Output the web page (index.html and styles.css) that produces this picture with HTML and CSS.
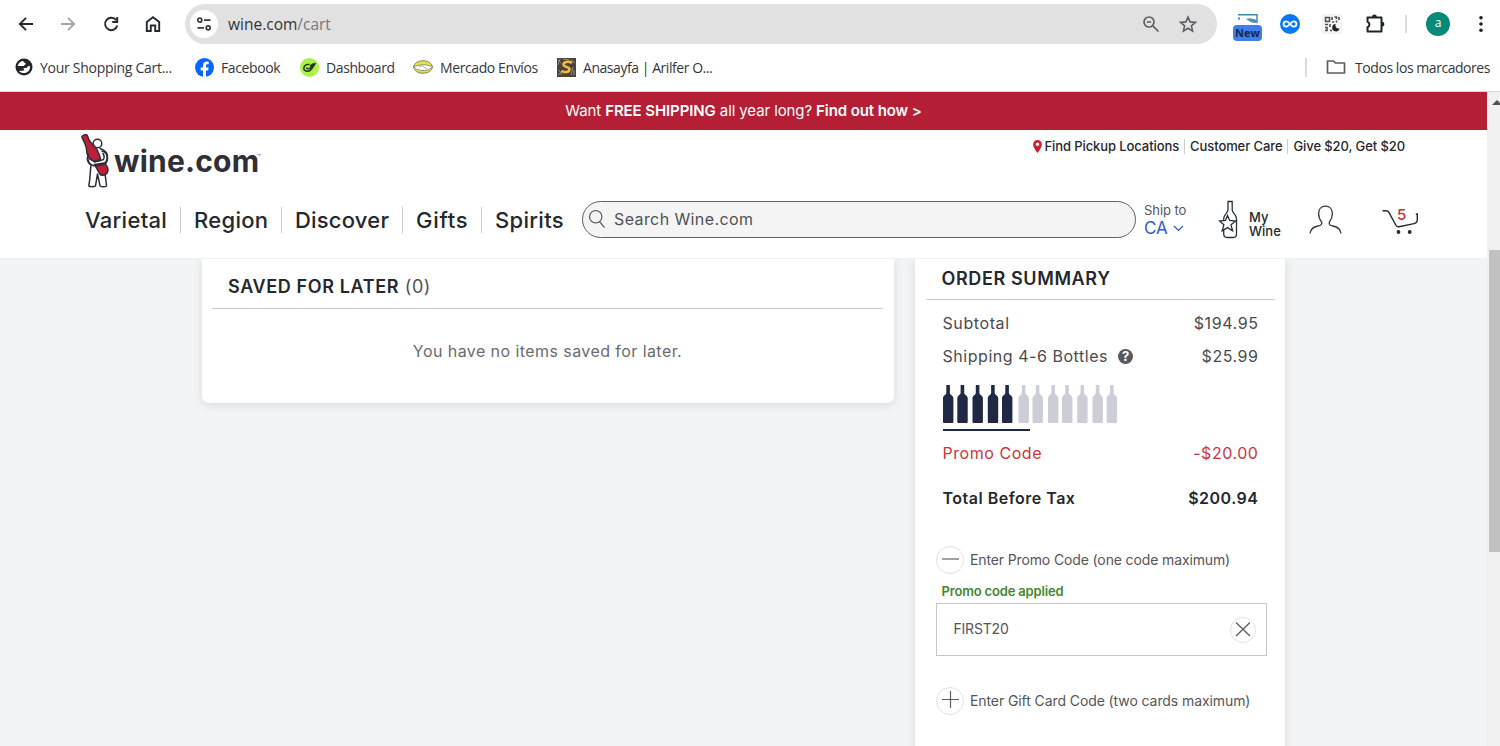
FILE: index.html
```html
<!DOCTYPE html>
<html lang="en">
<head>
  <meta charset="UTF-8" />
  <meta name="viewport" content="width=device-width, initial-scale=1.0"/>
  <title>Your Shopping Cart</title>
  <link rel="stylesheet" href="styles.css">
</head>
<body>
  <!-- Browser toolbar -->
  <div class="toolbar">
    <div class="nav-buttons">
      <svg width="20" height="20" viewBox="0 0 20 20" fill="none" stroke="#27282b" stroke-width="1.9"><path d="M17 10H4.5M10 3.8L3.8 10l6.2 6.2"/></svg>
      <svg width="20" height="20" viewBox="0 0 20 20" fill="none" stroke="#a5a5a7" stroke-width="1.9"><path d="M3 10h12.5M10 3.8l6.2 6.2-6.2 6.2"/></svg>
      <svg width="20" height="20" viewBox="0 0 20 20" fill="none" stroke="#27282b" stroke-width="1.9"><path d="M15.3 6.3A6.2 6.2 0 1 0 16.3 11.5"/><path d="M16.2 3v5h-5" /></svg>
      <svg width="20" height="20" viewBox="0 0 20 20" fill="none" stroke="#27282b" stroke-width="1.9"><path d="M3.800 8L10 3.200 16.200 8v9h-4v-5.500H7.800V17h-4z"/></svg>
    </div>
    <div class="omnibox">
      <span class="site-info">
        <svg width="16" height="16" viewBox="0 0 16 16" fill="none" stroke="#3c3d40" stroke-width="1.7"><circle cx="3.800" cy="4.200" r="2"/><path d="M8 4.200h6.500M1.500 11.800H8"/><circle cx="12.200" cy="11.800" r="2"/></svg>
      </span>
      <span class="url">wine.com<span class="path">/cart</span></span>
      <svg class="zoom-icon" width="18" height="18" viewBox="0 0 18 18" fill="none" stroke="#5f6063" stroke-width="1.7"><circle cx="7" cy="7" r="5"/><path d="M10.800 10.800l5.700 5.700M4.800 7h4.400"/></svg>
      <svg width="20" height="20" viewBox="0 0 20 20" fill="none" stroke="#5f6063" stroke-width="1.6"><path d="M10 3l2.100 4.900 5.300.5-4 3.500 1.200 5.200L10 14.300l-4.600 2.800 1.200-5.200-4-3.500 5.300-.5z"/></svg>
    </div>
    <div class="extensions">
      <span class="ext-new">
        <svg width="20" height="11" viewBox="0 0 20 11"><path d="M.5 0h19v11h-19z" fill="#fff"/><path d="M0 .7h19.500M19 0v9M1 3v3" stroke="#4484a9" stroke-width="1.400"/><path d="M8 5c3.500-2 8 0 11 1v3c-5 .5-7-1.500-11-4z" fill="#4f91bd"/></svg>
        <b>New</b>
      </span>
      <svg class="ext-blue" width="20" height="20" viewBox="0 0 20 20"><circle cx="10" cy="10" r="10" fill="#0878f5"/><path d="M10 10C8.500 8 7.500 7.400 6.200 7.400a2.600 2.600 0 0 0 0 5.200c1.500 0 2.600-1.200 3.800-2.600s2.300-2.600 3.800-2.600a2.600 2.600 0 0 1 0 5.200c-1.300 0-2.300-.6-3.800-2.600z" fill="none" stroke="#fff" stroke-width="1.800"/></svg>
      <svg class="qr" width="18" height="18" viewBox="0 0 18 18" fill="none" stroke="#505050" stroke-width="1.600"><path d="M2.500 2.500h4v4h-4zM9 2v3M11.500 2h2v2M16 2v3M9 7h2M13.500 5.500v2M2 9.500h3M7 9v3M2 12.500h2v3H2M7 15.500h2"/><path d="M12.500 9a3.700 3.700 0 1 0 4 4.500c-2.500.5-4.500-1-4-4.500z" fill="#222" stroke="none"/></svg>
      <svg class="puzzle" width="22" height="22" viewBox="0 0 22 22"><path d="M3.500 4.500h14v14h-14v-4.200a3 3 0 0 0 0-5.600z" fill="none" stroke="#232428" stroke-width="2" stroke-linejoin="round"/><path d="M8 4a2.400 2.400 0 0 1 4.800 0zM18 8.800a2.400 2.400 0 0 1 0 4.800z" fill="#232428"/></svg>
      <span class="bar"></span>
      <span class="avatar">a</span>
      <svg class="menu" width="6" height="20" viewBox="0 0 6 20" fill="#222"><circle cx="3" cy="3.800" r="1.800"/><circle cx="3" cy="10" r="1.800"/><circle cx="3" cy="16.200" r="1.800"/></svg>
    </div>
  </div>

  <div class="bookmarks">
    <span class="bookmark bm-cart"><svg width="18" height="18" viewBox="0 0 18 18"><circle cx="9" cy="9" r="8.500" fill="#242529"/><path d="M8.500 3c-.5 1.600 1.800 1.500 2.200 2.400.3 1.200-1.500 1.100-2 2.600H2.800C3.200 5 5.500 3 8.500 3zM14.800 8c.6 3.500-1.300 6.300-4.800 7-2.500.4-4.500-.4-6-2l5-.6c.7-.8-.2-1.600-1-1.900l1.500-.5h2c1.200-1.500 1.700-2 3.300-2z" fill="#fff"/></svg>Your Shopping Cart...</span>
    <span class="bookmark bm-facebook"><svg width="19" height="19" viewBox="0 0 19 19"><circle cx="9.500" cy="9.500" r="9.500" fill="#0866ff"/><path d="M8 19v-6.500H5.700V9.500H8V8c0-3 1.500-4.400 4-4.400.8 0 1.300.1 1.700.2v2.500h-1.200c-1.200 0-1.500.6-1.500 1.700v1.500h2.600l-.5 3H11V19z" fill="#fff"/></svg>Facebook</span>
    <span class="bookmark bm-dashboard"><svg width="19" height="19" viewBox="0 0 19 19"><circle cx="9.500" cy="9.500" r="9.500" fill="#a8f24b"/><path d="M9.500 6.500C6 6 3.800 8 3.800 10.500c.3 3.500 5.700 3.500 7.700.5l4-6M6.500 9.500c.5 1.800 2.500 1.800 4 .3l3-4.300-3.500 2.500" fill="none" stroke="#20321c" stroke-width="1.400"/></svg>Dashboard</span>
    <span class="bookmark bm-mercado"><svg width="20" height="14" viewBox="0 0 20 14"><ellipse cx="10" cy="7" rx="9.400" ry="6.300" fill="#eadf49" stroke="#858565"/><path d="M1 6c3 1 5-1.500 8.500-1.200C13 4 16 6.500 19 6c0 2.500-4 4.500-9 4.500S1 8.500 1 6z" fill="#fff" stroke="#777e73" stroke-width=".8"/><path d="M6 7l3-1.500 5 3.500" fill="none" stroke="#999" stroke-width=".8"/></svg>Mercado Envíos</span>
    <span class="bookmark bm-arilfer"><svg width="19" height="19" viewBox="0 0 19 19"><path d="M0 0h19v19H0z" fill="#4c4239"/><path d="M1 2l3 3M3 1l-2 6M14 2l4 3M2 12l3 5M16 9l-2 8M1 17l5-4M17 12v5M6 1l6 1" stroke="#9b8d7b"/><path d="M15 5C11 2.500 6 4 6.500 7c1 2.500 6.500 1.500 6 4.500-.4 3-5 3.500-8 1.300" fill="none" stroke="#f2b93c" stroke-width="2.500"/></svg>Anasayfa | Arilfer O...</span>
    <span class="all-bookmarks"><svg width="20" height="16" viewBox="0 0 20 16" fill="none" stroke="#5b5c60" stroke-width="1.700"><path d="M1.500 2h6l2 2h9v10h-17z" stroke-linejoin="round"/></svg>Todos los marcadores</span>
  </div>

  <div class="viewport">
    <div class="page">
      <div class="promo-bar">Want <b>FREE SHIPPING</b> all year long? <b>Find out how &gt;</b></div>

      <header>
        <div class="header-top">
          <a class="logo">
            <svg width="30" height="54" viewBox="0 0 30 54" stroke="#2e2e38" stroke-width="1.500" stroke-linejoin="round" stroke-linecap="round">
              <circle cx="16.500" cy="9.500" r="4.300" fill="#fff"/>
              <path d="M19 14.500c5 1.500 8 5 7.500 10-.2 3-1.500 5-3.500 6.500.5 7 2 14 2.500 21-1.500 1.200-5 1-6.500-.3L16.500 40l-2 11.800c-1.700 1.300-5 1.300-6.700 0C9.500 44 9 38 10 31c-3.500-3.500-4-8-2-13" fill="#fff"/>
              <path d="M13.500 30.500l10-1.500c3 3 4.500 7 2.500 10-2 3-6 3-7.500.5z" fill="#bd1f38"/>
              <path d="M.8 3C1.500 1 4.500 0 6.200 1.200c.8 3 2 6 4.800 8.500 4 3.500 7 8 8.500 15.300l-5.500 3c-4.500-2-8.500-6-8.500-12.500C5.300 11 2.800 7.500.8 3z" fill="#bd1f38"/>
              <path d="M7.200 20.500c-2 5-.5 9 3.300 10.500 4.500 1.500 9 1 13-1.500 3-2.500 3.500-7 1.500-10-1-1.500-2.500-2-4-2.500" fill="none"/>
              <path d="M8.500 24.500c2.500 2.500 6.500 3 9.500 2.500l4.500-1.500c1-2 .8-4-.5-6" fill="none"/>
            </svg>
            <span class="logo-text">wine.com</span><sup>™</sup>
          </a>
          <div class="top-links">
            <svg width="9" height="13" viewBox="0 0 9 13"><path d="M4.500 0A4.400 4.400 0 0 0 .1 4.400C.1 7.500 4.500 13 4.500 13s4.400-5.500 4.400-8.600A4.400 4.400 0 0 0 4.500 0zm0 2.500a1.800 1.800 0 1 1 0 3.600 1.800 1.800 0 0 1 0-3.600z" fill="#cf2030"/></svg>
            <a class="pickup">Find Pickup Locations</a>
            <a class="care">Customer Care</a>
            <a class="give">Give $20, Get $20</a>
          </div>
        </div>
        <div class="header-main">
          <nav>
            <a class="varietal">Varietal</a>
            <a class="region">Region</a>
            <a class="discover">Discover</a>
            <a class="gifts">Gifts</a>
            <a class="spirits">Spirits</a>
          </nav>
          <div class="search">
            <svg width="18" height="20" viewBox="0 0 18 20" fill="none" stroke="#55565a" stroke-width="1.200"><circle cx="7.700" cy="7.700" r="6.200"/><path d="M11.500 12.700l5 6"/></svg>
            <span>Search Wine.com</span>
          </div>
          <div class="ship-to">
            <span class="ship-label">Ship to</span>
            <span class="ship-state">CA <svg width="11" height="7" viewBox="0 0 11 7" fill="none" stroke="#2d5bd0" stroke-width="1.200"><path d="M1 1l4.500 4.500L10 1"/></svg></span>
          </div>
          <a class="my-wine">
            <svg width="21" height="39" viewBox="0 0 21 39"><g fill="none" stroke="#26313a" stroke-width="1.300"><path d="M10 1.500h4.200v8.500c0 3 4.300 4.500 4.300 8.500v15c0 2.500-1 4-3 4H9c-2.500 0-3.300-1.500-3.300-4v-15c0-4 4.300-5.500 4.300-8.500z" fill="#fff"/><path d="M9.500 15.500l2.200 5 6 .5-4.700 3.800 1.600 6-5.100-3.200-5.300 3.200 1.700-6L1.500 21l6-.5z" fill="#fff"/></g></svg>
            <span>My<br>Wine</span>
          </a>
          <svg class="account" width="33" height="30" viewBox="0 0 33 30" fill="none" stroke="#363a40" stroke-width="1.300"><path d="M1 28.500c.5-4.500 3-6.500 8-7.500 3-.6 4.500-1.800 3.600-4-1.800-2.200-3-5-3-8.500 0-4.500 2.800-7.300 6.900-7.300s6.900 2.800 6.900 7.300c0 3.500-1.200 6.300-3 8.500-.9 2.200.6 3.400 3.600 4 5 1 7.500 3 8 7.500"/></svg>
          <a class="cart">
            <svg width="37" height="27" viewBox="0 0 37 27" fill="none" stroke="#252a2e" stroke-width="1.400"><path d="M.5 1.700h3.800c1.400 0 2 .5 2.800 2l6.500 12c.7 1.500 1.500 2.300 3.300 2l14-2.800c2.400-.4 4.400-1.600 4.400-4.400V5h-1.500"/><circle cx="16.500" cy="23" r="1.900" fill="#252a2e" stroke="none"/><circle cx="27.700" cy="23" r="1.900" fill="#252a2e" stroke="none"/></svg>
            <span class="cart-count">5</span>
          </a>
        </div>
      </header>

      <main>
        <section class="card saved">
          <h2><b>SAVED FOR LATER</b> (0)</h2>
          <p>You have no items saved for later.</p>
        </section>

        <section class="card summary">
          <h2>ORDER SUMMARY</h2>
          <div class="line subtotal"><span>Subtotal</span><span>$194.95</span></div>
          <div class="line shipping">
            <span>Shipping 4-6 Bottles <i class="help">?</i></span>
            <span>$25.99</span>
          </div>
          <svg class="bottles" width="176" height="47" viewBox="0 0 176 47">
            <defs><path id="bottle" d="M3.300 .5q0-.5.500-.5h2.600q.5 0 .5.500v7.500c0 2 3.500 2.500 3.500 5V37q0 1-1 1H1q-1 0-1-1V13C0 10.500 3.300 10 3.300 8z"/></defs>
            <g fill="#1f2946"><use href="#bottle" x="0"/><use href="#bottle" x="14.300"/><use href="#bottle" x="29.500"/><use href="#bottle" x="44.800"/><use href="#bottle" x="59"/><path d="M0 44h87v2H0z"/></g>
            <g fill="#cdcdd5"><use href="#bottle" x="75.500"/><use href="#bottle" x="89.500"/><use href="#bottle" x="105"/><use href="#bottle" x="119"/><use href="#bottle" x="134.200"/><use href="#bottle" x="149.500"/><use href="#bottle" x="163.700"/></g>
          </svg>
          <div class="line discount"><span>Promo Code</span><span>-$20.00</span></div>
          <div class="line total"><span>Total Before Tax</span><span>$200.94</span></div>

          <div class="code-toggle promo-toggle">
            <svg width="28" height="28" viewBox="0 0 28 28" fill="none"><circle cx="14" cy="14" r="13.500" fill="#fff" stroke="#e1e1e4"/><path d="M6 13h17" stroke="#77787c" stroke-width="1.400"/></svg>
            <span>Enter Promo Code (one code maximum)</span>
          </div>
          <div class="applied">Promo code applied</div>
          <div class="code-input">
            <span>FIRST20</span>
            <svg width="26" height="26" viewBox="0 0 26 26" fill="none"><circle cx="13" cy="13" r="12.500" fill="#fff" stroke="#e1e1e4"/><path d="M6 5.500l14 13.500M20 5.500L6 19" stroke="#56575b" stroke-width="1.200"/></svg>
          </div>
          <div class="code-toggle gift-toggle">
            <svg width="28" height="28" viewBox="0 0 28 28" fill="none"><circle cx="14" cy="14" r="13.500" fill="#fff" stroke="#e1e1e4"/><path d="M6 12.500h17M14.500 4v17" stroke="#5d5e62" stroke-width="1.200"/></svg>
            <span>Enter Gift Card Code (two cards maximum)</span>
          </div>
        </section>
      </main>
    </div>
    <div class="scrollbar">
      <span class="arrow"></span>
      <span class="thumb"></span>
    </div>
  </div>
</body>
</html>
```
FILE: styles.css
```css
* {
  box-sizing: border-box;
}
body {
  margin: 0;
  height: 746px;
  display: flex;
  flex-direction: column;
  overflow: hidden;
  background: #fff;
  color: #25282c;
  font-family: Inter, sans-serif;
}
svg {
  display: block;
  flex-shrink: 0;
}
span,
a {
  white-space: nowrap;
}

/* Browser */
.toolbar {
  display: flex;
  align-items: center;
  height: 48px;
  padding-left: 16px;
  font-family: "Open Sans", sans-serif;
}
.nav-buttons {
  display: flex;
  gap: 22.3px;
  width: 169px;
}
.omnibox {
  display: flex;
  align-items: center;
  width: 1032px;
  height: 40px;
  padding: 0 19px 0 5px;
  border-radius: 20px;
  background: #e1e1e1;
}
.site-info {
  display: flex;
  align-items: center;
  justify-content: center;
  width: 28px;
  height: 28px;
  border-radius: 50%;
  background: #fff;
}
.url {
  margin-left: 10px;
  font-size: 15.5px;
  color: #333437;
}
.path {
  color: #77787a;
}
.zoom-icon {
  margin-left: auto;
  margin-right: 18px;
}
.extensions {
  display: flex;
  align-items: center;
  flex: 1;
  padding-left: 16px;
}
.ext-new {
  display: flex;
  flex-direction: column;
  align-items: center;
  padding-top: 6px;
}
.ext-new b {
  width: 29px;
  height: 16px;
  border-radius: 4px;
  background: #417fe8;
  color: #14284d;
  font-size: 11px;
  line-height: 16px;
  text-align: center;
}
.ext-blue {
  margin-left: 18px;
}
.qr {
  margin-left: 23px;
  background: #f6f6f6;
  box-shadow: 0 0 1px #aaa;
}
.puzzle {
  margin-left: 23px;
}
.bar {
  width: 2px;
  height: 18px;
  margin-left: 19px;
  background: #dedad9;
}
.avatar {
  width: 24px;
  height: 24px;
  margin-left: 19px;
  border-radius: 50%;
  background: #078a78;
  color: #fff;
  font-size: 12px;
  line-height: 22px;
  text-align: center;
}
.menu {
  margin-left: 28px;
}
.bookmarks {
  display: flex;
  align-items: center;
  height: 44px;
  padding: 0 10px 5px 15px;
  border-bottom: 1px solid #d8d8d8;
  font-family: "Open Sans", sans-serif;
  font-size: 14px;
  letter-spacing: -0.4px;
  color: #35363a;
}
.bookmark {
  display: flex;
  align-items: center;
  gap: 7px;
}
.bm-cart {
  width: 180px;
  letter-spacing: -0.28px;
}
.bm-facebook {
  width: 105px;
}
.bm-dashboard {
  width: 113px;
}
.bm-mercado {
  width: 144px;
}
.bm-arilfer {
  letter-spacing: -0.45px;
}
.all-bookmarks {
  display: flex;
  align-items: center;
  gap: 9px;
  margin-left: auto;
  padding-left: 19px;
  border-left: 2px solid #dedad9;
  letter-spacing: -0.45px;
}

/* Page */
.viewport {
  display: flex;
  flex: 1;
  min-height: 0;
}
.page {
  display: flex;
  flex-direction: column;
  width: 1487px;
}
.promo-bar {
  height: 38px;
  background: #b51f36;
  color: #fff;
  font-size: 15px;
  line-height: 37px;
  letter-spacing: -0.1px;
  text-align: center;
}
.promo-bar b {
  font-weight: 600;
}
header {
  height: 129px;
  padding: 4px 0 0 81px;
  border-bottom: 1px solid #f0f0f1;
  background: #fff;
}
.header-top {
  display: flex;
  justify-content: space-between;
  height: 61px;
  padding-right: 82px;
}
.logo {
  display: flex;
  color: #302f38;
}
.logo-text {
  margin-left: 3px;
  font-size: 30px;
  line-height: 54px;
  font-weight: 700;
  letter-spacing: 0.2px;
}
.logo sup {
  font-size: 6px;
  margin-top: 19px;
  margin-left: -2px;
}
.top-links {
  display: flex;
  align-items: center;
  height: 25px;
  font-size: 13px;
  font-weight: 500;
  letter-spacing: -0.09px;
}
.top-links svg {
  margin-top: -1px;
}
.top-links a {
  line-height: 15px;
}
.pickup {
  margin-left: 2px;
}
.care,
.give {
  margin-left: 5px;
  padding-left: 5px;
  border-left: 1px solid #ccc;
}
.header-main {
  display: flex;
  align-items: center;
  height: 49px;
}
nav {
  display: flex;
  width: 501px;
  font-size: 22px;
  font-weight: 500;
  letter-spacing: 0.3px;
}
nav a {
  padding-left: 13px;
  border-left: 1px solid #ccc;
  line-height: 26px;
}
nav .varietal {
  width: 99px;
  padding-left: 4px;
  border-left: 0;
}
.region {
  width: 101px;
}
.discover {
  width: 121px;
  letter-spacing: 0.2px;
}
.gifts {
  width: 79px;
  letter-spacing: 0.7px;
}
.search {
  display: flex;
  align-items: center;
  gap: 8px;
  width: 554px;
  height: 37px;
  padding: 0 0 1px 5px;
  border: 1px solid #606164;
  border-radius: 19px;
  background: #f4f4f4;
  color: #505154;
  font-size: 16px;
  letter-spacing: 0.4px;
}
.ship-to {
  display: flex;
  flex-direction: column;
  width: 73px;
  padding: 2px 0 0 8px;
  font-size: 13px;
  letter-spacing: -0.05px;
  color: #55565a;
}
.ship-label {
  line-height: 15px;
}
.ship-state {
  display: flex;
  align-items: center;
  gap: 5px;
  font-size: 17px;
  line-height: 20px;
  color: #2d5bd0;
}
.my-wine {
  display: flex;
  gap: 10px;
  width: 100px;
  padding: 0 0 0 9px;
  font-size: 13px;
  line-height: 14px;
  font-weight: 500;
}
.my-wine span {
  padding-top: 10px;
}
.cart {
  position: relative;
  margin-left: 40px;
  margin-top: 5px;
}
.cart-count {
  position: absolute;
  left: 15px;
  top: -3px;
  font-size: 15px;
  line-height: 18px;
  font-weight: 500;
  color: #cb2b34;
}
main {
  display: flex;
  flex: 1;
  min-height: 0;
  gap: 20.5px;
  padding-left: 202px;
  overflow: hidden;
  background: #f2f3f5;
}
.card {
  background: #fff;
  box-shadow: 0 2px 10px rgba(0, 0, 0, 0.1);
}
.card h2 {
  margin: 0;
  border-bottom: 1px solid #ccc;
  font-size: 18px;
  font-weight: 600;
  letter-spacing: 0.62px;
}
.saved {
  width: 692px;
  height: 144px;
  padding: 0 11px 0 10px;
  border-radius: 0 0 7px 7px;
}
.saved h2 {
  height: 50px;
  padding-left: 16px;
  line-height: 56px;
  font-weight: 400;
  color: #505154;
}
.saved h2 b {
  font-weight: 600;
  color: #25282c;
}
.saved p {
  margin: 32px 0 0;
  text-align: center;
  font-size: 16px;
  line-height: 20px;
  letter-spacing: 0.43px;
  color: #6a6b70;
}
.summary {
  width: 370px;
  height: 500px;
  padding: 0 10px 0 11px;
}
.summary h2 {
  height: 41px;
  padding-left: 16px;
  line-height: 40px;
}
.line {
  display: flex;
  justify-content: space-between;
  padding: 0 16px 0 17px;
  font-size: 16px;
  line-height: 20px;
  letter-spacing: 0.6px;
  color: #4a4b50;
}
.subtotal {
  margin-top: 13px;
}
.shipping {
  margin-top: 13px;
  letter-spacing: 0.54px;
}
.help {
  display: inline-block;
  width: 15px;
  height: 15px;
  margin-left: 5px;
  border-radius: 50%;
  background: #58595d;
  color: #fff;
  font-size: 13px;
  line-height: 15px;
  font-style: normal;
  font-weight: 700;
  letter-spacing: 0;
  text-align: center;
  vertical-align: 1px;
}
.bottles {
  margin: 19px 0 0 17px;
}
.discount {
  margin-top: 11px;
  letter-spacing: 0.55px;
  color: #cb343e;
}
.total {
  margin-top: 25px;
  font-weight: 600;
  letter-spacing: 0.5px;
  color: #25282c;
}
.code-toggle {
  display: flex;
  align-items: center;
  gap: 6.5px;
  margin-left: 10px;
  font-size: 14px;
  letter-spacing: -0.13px;
  color: #55565a;
}
.code-toggle span {
  padding-bottom: 1px;
}
.promo-toggle {
  margin-top: 38px;
}
.applied {
  margin: 9px 0 0 16px;
  font-size: 13px;
  line-height: 16px;
  font-weight: 600;
  letter-spacing: -0.17px;
  color: #46872f;
}
.code-input {
  display: flex;
  align-items: center;
  justify-content: space-between;
  width: 331px;
  height: 53px;
  margin: 4px 0 0 10px;
  padding: 0 10px 0 17px;
  border: 1px solid #c5c5ca;
  font-size: 14px;
  letter-spacing: -0.2px;
  color: #55565a;
}
.code-input span {
  padding-bottom: 2px;
}
.gift-toggle {
  margin-top: 31px;
  letter-spacing: -0.09px;
}
.scrollbar {
  width: 13px;
  background: #f1f1f1;
  overflow: hidden;
}
.arrow {
  display: block;
  margin: 8px 0 0 5px;
  width: 0;
  border: 5px solid transparent;
  border-top: 0;
  border-bottom-color: #505050;
}
.thumb {
  display: block;
  height: 302px;
  margin: 145px 0 0 2px;
  background: #c1c1c1;
}
```
